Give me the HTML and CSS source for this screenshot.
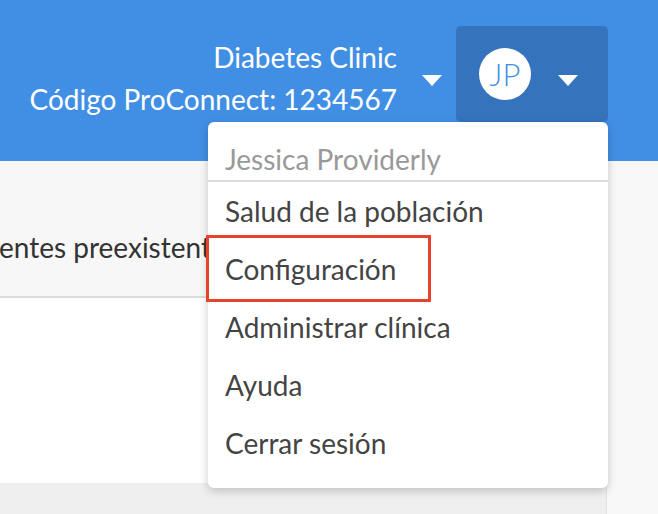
FILE: index.html
```html
<!DOCTYPE html>
<html lang="es">
<head>
    <meta charset="UTF-8">
    <meta name="viewport" content="width=device-width, initial-scale=1.0">
    <title>ProConnect</title>
    <link rel="stylesheet" href="styles.css">
</head>
<body>
    <header class="topbar">
        <div class="clinic">
            <div class="clinic-text">
                <div>Diabetes Clinic</div>
                <div>Código ProConnect: 1234567</div>
            </div>
            <span class="caret"></span>
        </div>
        <div class="user">
            <div class="avatar">JP</div>
            <span class="caret"></span>
        </div>

        <div class="menu">
            <div class="menu-name">Jessica Providerly</div>
            <a class="menu-item" href="#">Salud de la población</a>
            <a class="menu-item highlight" href="#">Configuración</a>
            <a class="menu-item" href="#">Administrar clínica</a>
            <a class="menu-item" href="#">Ayuda</a>
            <a class="menu-item" href="#">Cerrar sesión</a>
        </div>
    </header>

    <div class="page">
        <div class="panel">
            <div class="table-head">
                <span class="col-title">entes preexistentes</span>
            </div>
            <div class="table-body"></div>
            <div class="table-foot"></div>
        </div>
    </div>
</body>
</html>
```

FILE: styles.css
```css
body {
    font-family: Lato, "Open Sans", sans-serif;
    margin: 0;
    padding: 0;
    background-color: #f8f8f8;
    overflow: hidden;
}
.topbar {
    position: relative;
    height: 161px;
    box-sizing: border-box;
    background: #418fe4;
    color: white;
    display: flex;
    justify-content: flex-end;
    align-items: flex-start;
    padding: 26px 50px 0 0;
}
.clinic {
    display: flex;
    align-items: flex-start;
    font-size: 28px;
}
.clinic-text {
    text-align: right;
    line-height: 42px;
    margin-top: 10px;
    white-space: nowrap;
}
.caret {
    display: block;
    width: 0;
    height: 0;
    border-left: 10px solid transparent;
    border-right: 10px solid transparent;
    border-top: 11px solid white;
}
.clinic .caret {
    margin: 49px 14px 0 25px;
}
.user {
    width: 152px;
    height: 96px;
    box-sizing: border-box;
    background: #3573bd;
    border-radius: 5px;
    display: flex;
    align-items: flex-start;
    padding: 22px 0 0 23px;
}
.avatar {
    width: 52px;
    height: 52px;
    border-radius: 50%;
    background: white;
    color: #418fe4;
    font-size: 31px;
    font-weight: 300;
    line-height: 52px;
    text-align: center;
}
.user .caret {
    margin: 27px 0 0 27px;
}
.menu {
    position: absolute;
    top: 122px;
    right: 50px;
    width: 400px;
    background: white;
    border-radius: 6px;
    box-shadow: 0 3px 10px rgba(0, 0, 0, 0.2);
    padding-bottom: 16px;
    z-index: 5;
}
.menu-name {
    color: #999;
    font-size: 28px;
    line-height: 34px;
    padding: 20px 17px 4px;
    border-bottom: 2px solid #ddd;
    white-space: nowrap;
}
.menu-item {
    display: block;
    position: relative;
    color: #444;
    font-size: 28px;
    line-height: 58px;
    padding: 0 17px;
    text-decoration: none;
    white-space: nowrap;
}
.menu-item.highlight::after {
    content: "";
    position: absolute;
    top: -5px;
    left: -2px;
    width: 219px;
    height: 61px;
    border: 3px solid #e5432b;
}
.page {
    height: 353px;
}
.panel {
    width: 606px;
    height: 100%;
    border-right: 1px solid #e2e2e2;
    display: flex;
    flex-direction: column;
}
.table-head {
    height: 135px;
    flex-shrink: 0;
    background: #f7f7f7;
    border-bottom: 2px solid #ddd;
    overflow: hidden;
    white-space: nowrap;
}
.col-title {
    display: block;
    font-size: 28px;
    line-height: 34px;
    color: #333;
    margin: 69px 0 0 -1px;
}
.table-body {
    height: 185px;
    flex-shrink: 0;
    background: white;
}
.table-foot {
    flex: 1;
    background: #efefef;
}
```
